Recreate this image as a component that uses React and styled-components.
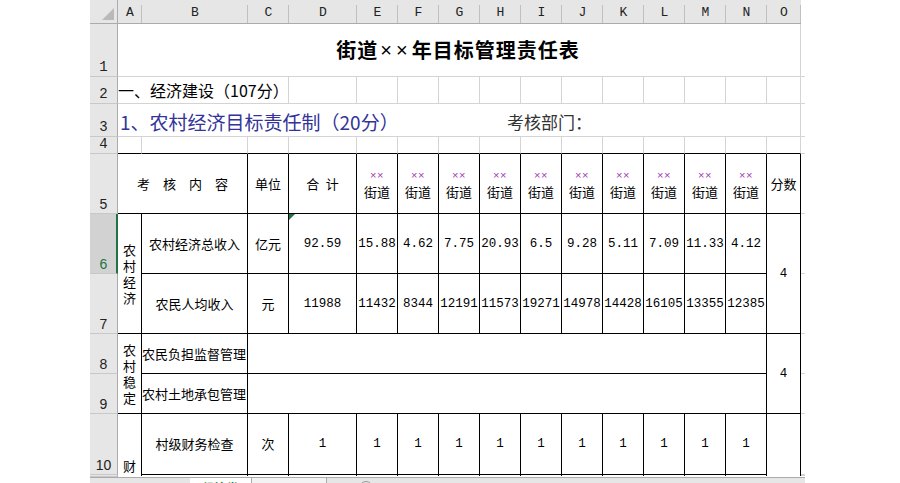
import React from 'react';
import styled, { createGlobalStyle } from 'styled-components';

const INK = '#000';
const GRID = '#d4d4d4';
const HEAD_BG = '#e6e6e6';
const HEAD_LINE = '#ababab';
const GREEN = '#217346';
const CJK = '"Noto Sans CJK SC", "Noto Sans", sans-serif';
const MONO = '"Liberation Mono", "DejaVu Sans Mono", monospace';

const GlobalStyle = createGlobalStyle`
  html, body { margin: 0; padding: 0; background: #fff; }
  body { width: 900px; height: 483px; overflow: hidden; font-family: ${CJK}; }
`;

const Page = styled.div`
  display: flex;
  height: 483px;
  padding-left: 90px;
`;

const Workbook = styled.div`
  width: 715px;
  height: 483px;
  display: flex;
  flex-direction: column;
  overflow: hidden;
`;

const Sheet = styled.div`
  display: grid;
  grid-template-columns: 28px 24px 106px 41px 68px repeat(10, 41px) 34px 5px;
  grid-template-rows: 24px 53px 27px 33px 17px 60px 60px 60px 40px 40px 61px 1px;
  flex: none;
`;

const GridCell = styled.div`
  grid-column: ${p => p.$c} / span ${p => p.$cs || 1};
  grid-row: ${p => p.$r} / span ${p => p.$rs || 1};
  box-sizing: border-box;
  position: relative;
  min-width: 0;
  min-height: 0;
  overflow: hidden;
  display: flex;
  align-items: ${p => p.$v || 'center'};
  justify-content: ${p => p.$h || 'center'};
  border-right: 1px solid ${p => (p.$rb ? INK : GRID)};
  border-bottom: 1px solid ${p => (p.$bb ? INK : GRID)};
  font-size: 13px;
  line-height: 16px;
  color: #000;
  white-space: nowrap;
`;

const Corner = styled.div`
  grid-column: 1;
  grid-row: 1;
  position: relative;
  background: ${HEAD_BG};
  border-right: 1px solid ${HEAD_LINE};
  border-bottom: 1px solid ${HEAD_LINE};
  box-sizing: border-box;
  &::after {
    content: '';
    position: absolute;
    right: 3px;
    bottom: 3px;
    width: 0;
    height: 0;
    border-left: 12px solid transparent;
    border-bottom: 12px solid #b9b9b9;
  }
`;

const ColHead = styled.div`
  grid-column: ${p => p.$c};
  grid-row: 1;
  position: relative;
  box-sizing: border-box;
  background: ${p => (p.$blank ? '#fff' : HEAD_BG)};
  border-bottom: 1px solid ${p => (p.$blank ? '#fff' : HEAD_LINE)};
  display: flex;
  align-items: center;
  justify-content: center;
  font-family: ${MONO};
  font-size: 13px;
  color: #222;
  padding-top: 2px;
  &::after {
    content: '';
    position: absolute;
    right: 0;
    top: 5px;
    bottom: 0;
    width: 1px;
    background: ${p => (p.$blank ? 'transparent' : '#c0c0c0')};
  }
`;

const RowHead = styled.div`
  grid-column: 1;
  grid-row: ${p => p.$r};
  box-sizing: border-box;
  background: ${p => (p.$sel ? '#d2d2d2' : HEAD_BG)};
  border-right: ${p => (p.$sel ? `2px solid ${GREEN}` : `1px solid ${HEAD_LINE}`)};
  border-bottom: 1px solid #c8c8c8;
  color: ${p => (p.$sel ? GREEN : '#222')};
  display: flex;
  align-items: flex-end;
  justify-content: center;
  padding-bottom: 1px;
  padding-left: ${p => (p.$sel ? '1px' : '0')};
  font-family: ${p => (p.$serif ? MONO : '"Liberation Sans", Arial, sans-serif')};
  font-size: 14px;
  line-height: 16px;
  overflow: hidden;
`;

const TitleCell = styled(GridCell)`
  font-size: 20px;
  font-weight: 700;
  letter-spacing: 1px;
  line-height: 24px;
  padding-right: 2px;
`;

const Times = styled.span`
  font-family: "Liberation Sans", Arial, sans-serif;
  font-weight: 400;
  font-size: 20px;
  letter-spacing: 4px;
  margin-left: 2px;
`;

const SectionCell = styled(GridCell)`
  font-size: 16px;
  line-height: 20px;
  padding: 0 0 1px 0;
`;

const SubjectCell = styled(GridCell)`
  display: grid;
  grid-template-columns: 389px auto;
  align-items: end;
  justify-content: start;
  padding-bottom: 3px;
`;

const Subject = styled.span`
  font-size: 19px;
  line-height: 22px;
  color: #333399;
  padding-left: 2px;
`;

const Dept = styled.span`
  font-size: 17px;
  line-height: 22px;
  color: #333;
`;

const TableCell = styled(GridCell)`
  border-right: 1px solid ${INK};
  border-bottom: ${p => (p.$open ? '0' : `1px solid ${INK}`)};
  &::before {
    content: '';
    display: ${p => (p.$flag ? 'block' : 'none')};
    position: absolute;
    left: 0;
    top: 0;
    width: 0;
    height: 0;
    border-top: 6px solid ${GREEN};
    border-right: 6px solid transparent;
  }
`;

const Spaced = styled.span`
  white-space: pre;
  word-spacing: ${p => p.$ws || '3.6px'};
`;

const NumberCell = styled(TableCell)`
  font-family: ${MONO};
  font-size: 12.5px;
`;

const VerticalCell = styled(TableCell)`
  white-space: normal;
  align-items: ${p => p.$v || 'center'};
  padding-top: ${p => p.$pt || '0'};
`;

const VerticalText = styled.span`
  display: block;
  width: 13px;
  word-break: break-all;
  text-align: center;
  line-height: ${p => p.$lh || '16px'};
`;

const StreetHead = styled(TableCell)`
  flex-direction: column;
  padding-top: 2px;
`;

const Marks = styled.span`
  font-family: "Liberation Sans", Arial, sans-serif;
  font-size: 11px;
  line-height: 14px;
  color: #a03cb4;
  letter-spacing: 0.5px;
`;

const Street = styled.span`
  font-size: 13px;
  line-height: 19px;
`;

const TabBar = styled.div`
  display: flex;
  flex: 1;
  margin-top: 1px;
  background: ${HEAD_BG};
  border-top: 1px solid ${HEAD_LINE};
  overflow: hidden;
`;

const NavArea = styled.div`
  width: 100px;
  flex: none;
`;

const Tab = styled.div`
  flex: none;
  width: ${p => p.$w}px;
  box-sizing: border-box;
  margin-top: ${p => (p.$active ? '-1px' : '0')};
  background: ${p => (p.$active ? '#fff' : '#f3f3f3')};
  border-right: 1px solid ${HEAD_LINE};
  color: ${p => (p.$active ? GREEN : '#444')};
  font-weight: ${p => (p.$active ? 700 : 400)};
  font-size: 12px;
  line-height: 16px;
  padding-top: 3px;
  text-align: center;
`;

const AddSheet = styled.div`
  flex: none;
  width: 14px;
  height: 14px;
  margin: 3px 0 0 32px;
  border-radius: 50%;
  border: 1px solid #9a9a9a;
  box-sizing: border-box;
`;

const COLS = ['A', 'B', 'C', 'D', 'E', 'F', 'G', 'H', 'I', 'J', 'K', 'L', 'M', 'N', 'O'];
const TOTALS = ['15.88', '4.62', '7.75', '20.93', '6.5', '9.28', '5.11', '7.09', '11.33', '4.12'];
const PER_CAP = ['11432', '8344', '12191', '11573', '19271', '14978', '14428', '16105', '13355', '12385'];
const STREETS = Array.from({ length: 10 }, (_, i) => i);

// grid columns: 1 = row header, 2 = A ... 16 = O, 17 = P
const colOf = i => 6 + i; // E..N
const P = 17;

export default function App() {
  return (
    <>
      <GlobalStyle />
      <Page>
        <Workbook>
          <Sheet>
            <Corner />
            {COLS.map((l, i) => (
              <ColHead key={l} $c={i + 2}>{l}</ColHead>
            ))}
            <ColHead $c={P} $blank />

            {[1, 2, 3, 4, 5, 6, 7, 8, 9, 10].map(n => (
              <RowHead key={n} $r={n + 1} $serif={n <= 4} $sel={n === 6}>{n}</RowHead>
            ))}
            <RowHead $r={12} />

            {/* Row 1 */}
            <TitleCell $c={2} $cs={15} $r={2}>
              街道<Times>××</Times>年目标管理责任表
            </TitleCell>
            <GridCell $c={P} $r={2} />

            {/* Row 2 */}
            <SectionCell $c={2} $cs={3} $r={3} $h="flex-start">一、经济建设（107分）</SectionCell>
            {Array.from({ length: 12 }, (_, i) => (
              <GridCell key={i} $c={5 + i} $r={3} />
            ))}
            <GridCell $c={P} $r={3} />

            {/* Row 3 */}
            <SubjectCell $c={2} $cs={15} $r={4}>
              <Subject>1、农村经济目标责任制（20分）</Subject>
              <Dept>考核部门：</Dept>
            </SubjectCell>
            <GridCell $c={P} $r={4} />

            {/* Row 4 */}
            {COLS.map((l, i) => (
              <GridCell key={l} $c={i + 2} $r={5} $bb />
            ))}
            <GridCell $c={P} $r={5} />

            {/* Row 5 */}
            <TableCell $c={2} $cs={2} $r={6}>
              <Spaced $ws="3.6px">{'考  核  内  容'}</Spaced>
            </TableCell>
            <TableCell $c={4} $r={6}>单位</TableCell>
            <TableCell $c={5} $r={6}>
              <Spaced>{'合 计'}</Spaced>
            </TableCell>
            {STREETS.map(i => (
              <StreetHead key={i} $c={colOf(i)} $r={6}>
                <Marks>××</Marks>
                <Street>街道</Street>
              </StreetHead>
            ))}
            <TableCell $c={16} $r={6}>分数</TableCell>
            <GridCell $c={P} $r={6} />

            {/* Rows 6-7 */}
            <VerticalCell $c={2} $r={7} $rs={2}>
              <VerticalText>农村经济</VerticalText>
            </VerticalCell>
            <TableCell $c={3} $r={7}>农村经济总收入</TableCell>
            <TableCell $c={4} $r={7}>亿元</TableCell>
            <NumberCell $c={5} $r={7} $flag>92.59</NumberCell>
            {TOTALS.map((v, i) => (
              <NumberCell key={i} $c={colOf(i)} $r={7}>{v}</NumberCell>
            ))}
            <NumberCell $c={16} $r={7} $rs={2}>4</NumberCell>
            <GridCell $c={P} $r={7} />

            <TableCell $c={3} $r={8}>农民人均收入</TableCell>
            <TableCell $c={4} $r={8}>元</TableCell>
            <NumberCell $c={5} $r={8}>11988</NumberCell>
            {PER_CAP.map((v, i) => (
              <NumberCell key={i} $c={colOf(i)} $r={8}>{v}</NumberCell>
            ))}
            <GridCell $c={P} $r={8} />

            {/* Rows 8-9 */}
            <VerticalCell $c={2} $r={9} $rs={2}>
              <VerticalText>农村稳定</VerticalText>
            </VerticalCell>
            <TableCell $c={3} $r={9} $h="flex-start">农民负担监督管理</TableCell>
            <TableCell $c={4} $cs={12} $r={9} />
            <NumberCell $c={16} $r={9} $rs={2}>4</NumberCell>
            <GridCell $c={P} $r={9} />
            <TableCell $c={3} $r={10} $h="flex-start">农村土地承包管理</TableCell>
            <TableCell $c={4} $cs={12} $r={10} />
            <GridCell $c={P} $r={10} />

            {/* Row 10 */}
            <VerticalCell $c={2} $r={11} $rs={2} $open $v="flex-start" $pt="44px">
              <VerticalText>财务管理</VerticalText>
            </VerticalCell>
            <TableCell $c={3} $r={11}>村级财务检查</TableCell>
            <TableCell $c={4} $r={11}>次</TableCell>
            {Array.from({ length: 11 }, (_, i) => (
              <NumberCell key={i} $c={5 + i} $r={11}>1</NumberCell>
            ))}
            <TableCell $c={16} $r={11} $rs={2} $open />
            <GridCell $c={P} $r={11} />

            {/* Row 11 (cut by the sheet tabs) */}
            {Array.from({ length: 13 }, (_, i) => (
              <TableCell key={i} $c={3 + i} $r={12} $open />
            ))}
            <GridCell $c={P} $r={12} />
          </Sheet>
          <TabBar>
            <NavArea />
            <Tab $w={62} $active>经济类</Tab>
            <Tab $w={75}>社会事业</Tab>
            <AddSheet />
          </TabBar>
        </Workbook>
      </Page>
    </>
  );
}
